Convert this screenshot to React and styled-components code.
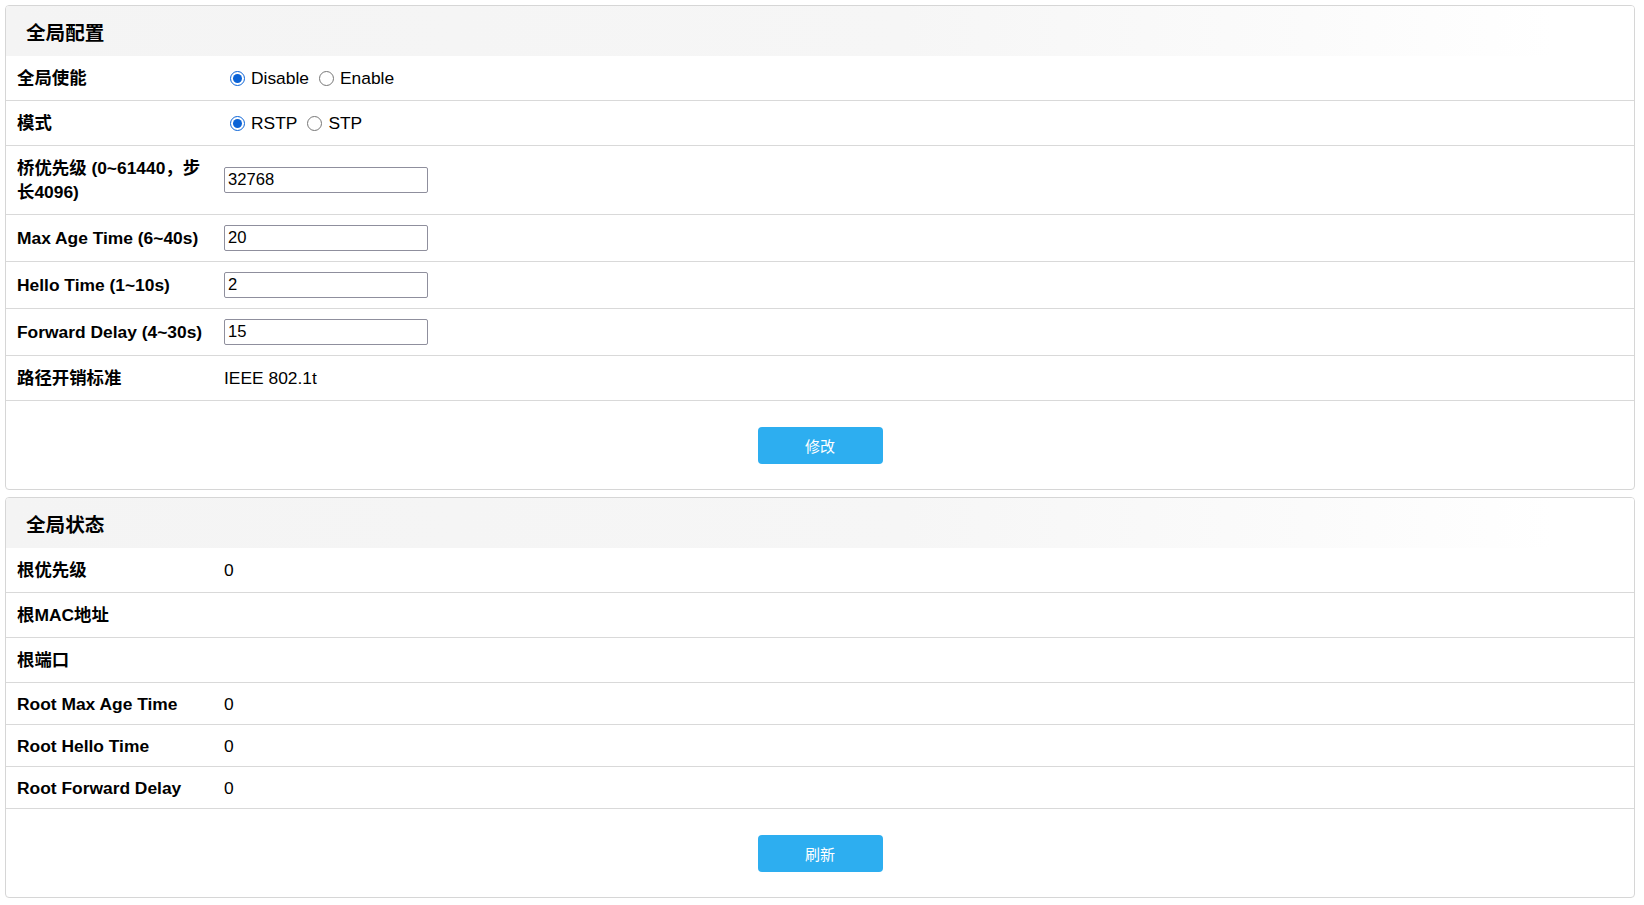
import React from 'react';
import styled, { createGlobalStyle } from 'styled-components';

const GlobalStyle = createGlobalStyle`
  body {
    margin: 0;
    padding: 5px 9px 7px 5px;
    background: #fff;
    font-family: "Liberation Sans", Arial, "Noto Sans CJK SC", sans-serif;
    color: #000;
  }
`;

const Page = styled.div`
  display: flex;
  flex-direction: column;
  gap: 7px;
`;

const Card = styled.section`
  border: 1px solid #d6d6d6;
  border-radius: 4px;
  background: #fff;
  overflow: hidden;
`;

const Header = styled.div`
  height: 50px;
  display: flex;
  align-items: center;
  padding-left: 20px;
  font-size: 19.6px;
  font-weight: bold;
  background: linear-gradient(to right, #f4f4f4 0%, #f6f6f6 55%, #fbfbfb 80%, #fff 95%);
`;

const rowPad = p => (p.$input ? '10px' : p.$cjk ? '11px' : '10.5px');

const Row = styled.div`
  display: grid;
  grid-template-columns: 196px 1fr;
  column-gap: 11px;
  align-items: center;
  padding: ${rowPad} 11px;
  border-bottom: 1px solid #d9d9d9;
  font-size: 17.4px;
  line-height: ${p => (p.$cjk ? '22px' : '20px')};
`;

const Label = styled.div`
  font-weight: bold;
  line-height: ${p => (p.$wrap ? '24px' : 'inherit')};
`;

const Value = styled.div`
  display: flex;
  align-items: center;
`;

const RadioLabel = styled.label`
  display: inline-flex;
  align-items: center;
  margin-right: 4px;
`;

const Radio = styled.input`
  width: 15px;
  height: 15px;
  margin: 0 6px 0 6px;
  accent-color: #0b63d6;
`;

const TextInput = styled.input`
  box-sizing: border-box;
  width: 204px;
  height: 26px;
  padding: 0 3px;
  border: 1px solid #8f8f9d;
  border-radius: 2px;
  font-family: "Liberation Sans", Arial, sans-serif;
  font-size: 16.6px;
  color: #000;
`;

const Footer = styled.div`
  display: flex;
  justify-content: center;
  padding: 26px 0 25px;
`;

const Button = styled.button`
  width: 125px;
  height: 37px;
  border: none;
  border-radius: 4px;
  background: #2daef0;
  color: #fff;
  font-family: "Noto Sans CJK SC", sans-serif;
  font-size: 15px;
  cursor: pointer;
`;

const RadioGroup = ({ name, options, value }) => (
  <Value>
    {options.map(o => (
      <RadioLabel key={o}>
        <Radio type="radio" name={name} defaultChecked={o === value} />
        {o}
      </RadioLabel>
    ))}
  </Value>
);

const Field = ({ label, value }) => (
  <Row $input>
    <Label>{label}</Label>
    <Value>
      <TextInput defaultValue={value} />
    </Value>
  </Row>
);

const status = [
  ['根优先级', '0', true],
  ['根MAC地址', '', true],
  ['根端口', '', true],
  ['Root Max Age Time', '0'],
  ['Root Hello Time', '0'],
  ['Root Forward Delay', '0'],
];

export default function App() {
  return (
    <>
      <GlobalStyle />
      <Page>
        <Card>
          <Header>全局配置</Header>
          <Row $cjk>
            <Label>全局使能</Label>
            <RadioGroup name="enable" options={['Disable', 'Enable']} value="Disable" />
          </Row>
          <Row $cjk>
            <Label>模式</Label>
            <RadioGroup name="mode" options={['RSTP', 'STP']} value="RSTP" />
          </Row>
          <Row $input>
            <Label $wrap>桥优先级 (0~61440，步长4096)</Label>
            <Value>
              <TextInput defaultValue="32768" />
            </Value>
          </Row>
          <Field label="Max Age Time (6~40s)" value="20" />
          <Field label="Hello Time (1~10s)" value="2" />
          <Field label="Forward Delay (4~30s)" value="15" />
          <Row $cjk>
            <Label>路径开销标准</Label>
            <Value>IEEE 802.1t</Value>
          </Row>
          <Footer>
            <Button>修改</Button>
          </Footer>
        </Card>
        <Card>
          <Header>全局状态</Header>
          {status.map(([k, v, cjk]) => (
            <Row key={k} $cjk={cjk}>
              <Label>{k}</Label>
              <Value>{v}</Value>
            </Row>
          ))}
          <Footer>
            <Button>刷新</Button>
          </Footer>
        </Card>
      </Page>
    </>
  );
}
